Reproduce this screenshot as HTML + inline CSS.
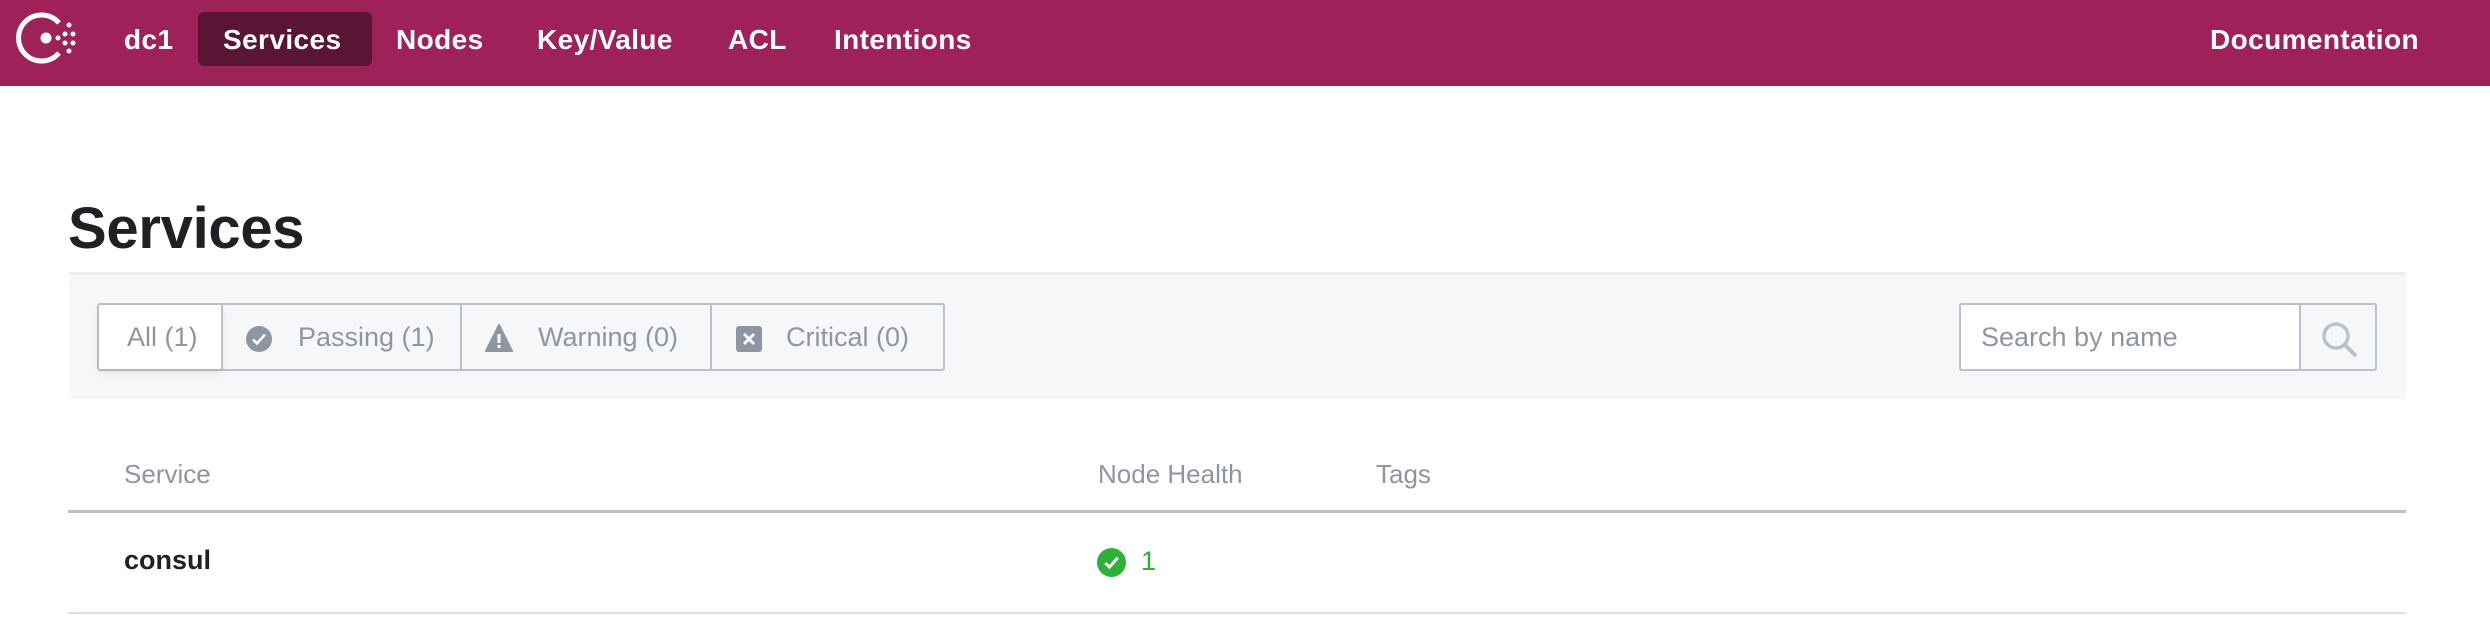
<!DOCTYPE html>
<html><head><meta charset="utf-8"><style>
*{margin:0;padding:0;box-sizing:border-box}
body{width:2490px;height:630px;background:#fff;font-family:"Liberation Sans",sans-serif;position:relative;overflow:hidden}
.hdr{position:absolute;left:0;top:0;width:2490px;height:86px;background:#9e2159}
.nav{position:absolute;top:0;height:86px;line-height:80px;color:#fff;font-size:28px;letter-spacing:0.4px;font-weight:bold}
.pill{position:absolute;left:198px;top:12px;width:174px;height:54px;background:#5a1434;border-radius:6px}
h1{position:absolute;left:68px;top:195px;font-size:58px;font-weight:bold;color:#1f2124;letter-spacing:-0.3px}
.bar{position:absolute;left:69px;top:272px;width:2337px;height:127px;background:#f6f7f9;border-top:3px solid #eceef4}
.flt{position:absolute;top:303px;height:68px;border:2px solid #bac1cc;border-radius:3px}
.seg{position:absolute;top:0;height:64px;line-height:64px;font-size:27px;color:#8e96a3}
.all{background:#fff;box-shadow:0 4px 8px rgba(0,0,0,0.08)}
.div{position:absolute;top:0;width:2px;height:64px;background:#bac1cc}
.th{position:absolute;top:459px;font-size:26px;color:#8e96a3}
</style></head><body>
<div class="hdr">
<svg style="position:absolute;left:0;top:0" width="90" height="86" viewBox="0 0 90 86">
<path d="M59 23 A23 23 0 1 0 59 53" fill="none" stroke="#fff" stroke-width="5"/>
<circle cx="46" cy="38" r="5.5" fill="#fff"/>
<circle cx="58" cy="38" r="2.5" fill="#fff"/>
<circle cx="65" cy="34" r="2.5" fill="#fff"/><circle cx="73" cy="34" r="2.5" fill="#fff"/>
<circle cx="65" cy="43" r="2.5" fill="#fff"/><circle cx="73" cy="43" r="2.5" fill="#fff"/>
<circle cx="69" cy="25" r="2.5" fill="#fff"/><circle cx="69" cy="51" r="2.5" fill="#fff"/>
</svg>
<div class="pill"></div>
<div class="nav" style="left:124px">dc1</div>
<div class="nav" style="left:223px">Services</div>
<div class="nav" style="left:396px">Nodes</div>
<div class="nav" style="left:537px">Key/Value</div>
<div class="nav" style="left:728px">ACL</div>
<div class="nav" style="left:834px">Intentions</div>
<div class="nav" style="left:2210px">Documentation</div>
</div>
<h1>Services</h1>
<div class="bar"></div>
<div class="flt" style="left:97px;width:848px">
<div class="seg all" style="left:0;width:124px;padding-left:28px">All (1)</div>
<div class="div" style="left:122px"></div>
<svg style="position:absolute;left:146px;top:20px" width="28" height="28" viewBox="0 0 28 28"><circle cx="14" cy="14" r="13" fill="#8e96a3"/><path d="M8 14.5l4 4 8-9" fill="none" stroke="#fff" stroke-width="2.5"/></svg>
<div class="seg" style="left:199px">Passing (1)</div>
<div class="div" style="left:361px"></div>
<svg style="position:absolute;left:386px;top:19px" width="28" height="28" viewBox="0 0 28 28"><path d="M14 1 L27 27 H1 Z" fill="#8e96a3" stroke="#8e96a3" stroke-linejoin="round" stroke-width="2"/><rect x="12.5" y="10" width="3" height="9" fill="#fff"/><rect x="12.5" y="21" width="3" height="3" fill="#fff"/></svg>
<div class="seg" style="left:439px">Warning (0)</div>
<div class="div" style="left:611px"></div>
<svg style="position:absolute;left:636px;top:20px" width="28" height="28" viewBox="0 0 28 28"><rect x="1" y="1" width="26" height="26" rx="3" fill="#8e96a3"/><path d="M9 9l10 10M19 9L9 19" stroke="#fff" stroke-width="2.8"/></svg>
<div class="seg" style="left:687px">Critical (0)</div>
</div>
<div class="flt" style="left:1959px;width:418px;background:#fff">
<div class="seg" style="left:20px">Search by name</div>
<div style="position:absolute;left:338px;top:0;width:76px;height:64px;background:#f6f7f9;border-left:2px solid #bac1cc"></div>
<svg style="position:absolute;left:360px;top:16px" width="40" height="40" viewBox="0 0 40 40"><circle cx="15" cy="15" r="12" fill="none" stroke="#bac1cc" stroke-width="3.5"/><path d="M24 24l11 11" stroke="#bac1cc" stroke-width="4"/></svg>
</div>
<div class="th" style="left:124px">Service</div>
<div class="th" style="left:1098px">Node Health</div>
<div class="th" style="left:1376px">Tags</div>
<div style="position:absolute;left:68px;top:510px;width:2338px;height:3px;background:#bac1cc"></div>
<div style="position:absolute;left:124px;top:545px;font-size:27px;font-weight:bold;color:#1f2124">consul</div>
<svg style="position:absolute;left:1097px;top:548px" width="29" height="29" viewBox="0 0 28 28"><circle cx="14" cy="14" r="14" fill="#2eb039"/><path d="M8 14.5l4 4 8-9" fill="none" stroke="#fff" stroke-width="2.8"/></svg>
<div style="position:absolute;left:1141px;top:546px;font-size:27px;color:#2eb039">1</div>
<div style="position:absolute;left:68px;top:612px;width:2338px;height:2px;background:#dcdfe6"></div>
</body></html>
